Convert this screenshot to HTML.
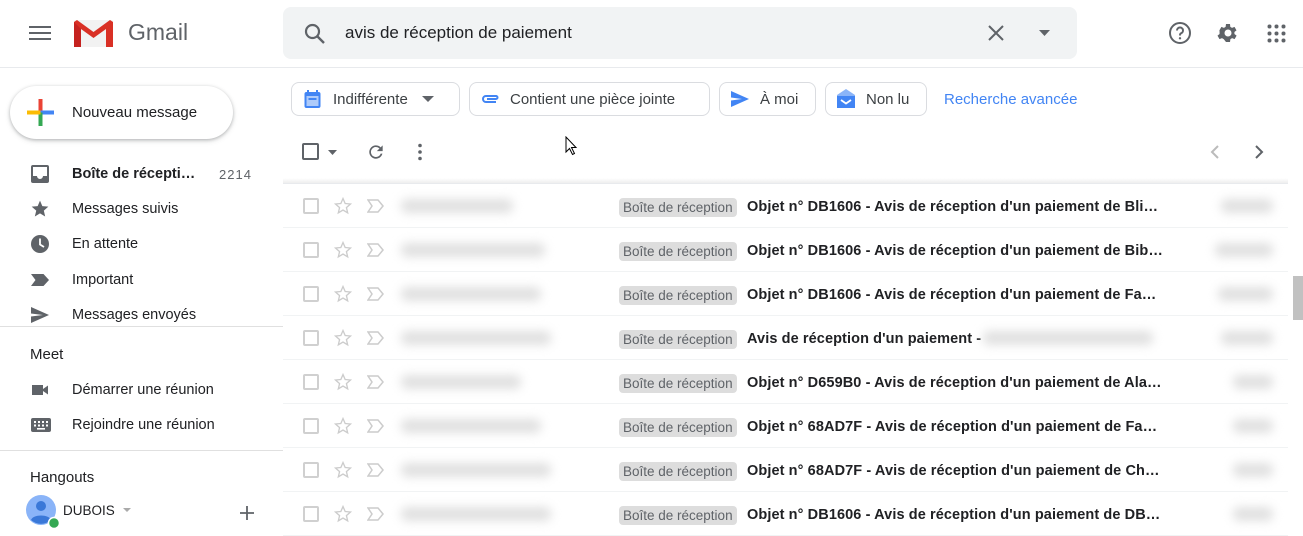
<!DOCTYPE html><html><head><meta charset="utf-8"><style>
*{margin:0;padding:0;box-sizing:border-box}
body{width:1303px;height:531px;overflow:hidden;background:#fff;font-family:"Liberation Sans",Arial,sans-serif;position:relative;color:#202124}
.a{position:absolute}
.nav{position:absolute;left:30px;font-size:14.5px;color:#202124;display:flex;align-items:center}
.nav svg{position:absolute;left:0}
.nav span{position:absolute;left:42px;white-space:nowrap}
.chip{position:absolute;top:82px;height:34px;border:1px solid #dadce0;border-radius:8px;font-size:15px;color:#3c4043;display:flex;align-items:center;white-space:nowrap}
.row{position:absolute;left:283px;width:1005px;height:44px;border-bottom:1px solid #f1f3f4}
.cb{position:absolute;left:20px;top:14px;width:16px;height:16px;border:2px solid #d0d0d0;border-radius:2px}
.blur{position:absolute;background:#e0e0e0;filter:blur(5px);height:14px;top:15px;border-radius:6px}
.lab{position:absolute;left:336px;top:14px;background:#ddd;border-radius:4px;font-size:13.5px;color:#5f6368;padding:2px 4px;height:19px;line-height:15px;white-space:nowrap}
.subj{position:absolute;left:464px;top:15px;font-size:14.5px;font-weight:bold;color:#202124;letter-spacing:.1px;white-space:nowrap}
</style></head><body>
<svg class="a" style="left:29px;top:25px" width="22" height="16"><rect y="1" width="22" height="2" fill="#5f6368"/><rect y="7" width="22" height="2" fill="#5f6368"/><rect y="13" width="22" height="2" fill="#5f6368"/></svg>
<svg class="a" style="left:73px;top:19px" width="41" height="29" viewBox="0 0 41 29"><rect x="1" y="1" width="39" height="27" rx="2" fill="#f2f2f2"/><path d="M1 3v25h7V10l12.5 9L33 10v18h7V3l-3-2-16.5 12L4 1z" fill="#d93025"/><path d="M1 3v25h7V10z" fill="#c5221f"/></svg>
<div class="a" style="left:128px;top:19px;font-size:23px;color:#5f6368">Gmail</div>
<div class="a" style="left:283px;top:7px;width:794px;height:52px;background:#f1f3f4;border-radius:8px"></div>
<svg class="a" style="left:304px;top:23px" width="22" height="22" viewBox="0 0 22 22"><circle cx="8.5" cy="8.5" r="6.5" fill="none" stroke="#5f6368" stroke-width="2.2"/><path d="M13 13l7 7" stroke="#5f6368" stroke-width="2.4"/></svg>
<div class="a" style="left:345px;top:23px;font-size:17px;color:#202124">avis de réception de paiement</div>
<svg class="a" style="left:988px;top:25px" width="16" height="16"><path d="M1 1l14 14M15 1L1 15" stroke="#5f6368" stroke-width="2"/></svg>
<svg class="a" style="left:1039px;top:30px" width="12" height="6"><path d="M0 0h11L5.5 6z" fill="#5f6368"/></svg>
<svg class="a" style="left:1168px;top:21px" width="24" height="24" viewBox="0 0 24 24"><circle cx="12" cy="12" r="10" fill="none" stroke="#5f6368" stroke-width="2"/><path d="M9 9.5a3 3 0 1 1 4 2.8c-1 .4-1 1-1 2.2" fill="none" stroke="#5f6368" stroke-width="2"/><circle cx="12" cy="17.3" r="1.2" fill="#5f6368"/></svg>
<svg class="a" style="left:1216px;top:21px" width="24" height="24" viewBox="0 0 24 24"><path fill="#5f6368" d="M19.4 13a7.5 7.5 0 0 0 0-2l2.1-1.6-2-3.5-2.5 1a7 7 0 0 0-1.7-1L15 3h-4l-.4 2.9a7 7 0 0 0-1.7 1l-2.5-1-2 3.5L4.6 11a7.5 7.5 0 0 0 0 2l-2.1 1.6 2 3.5 2.5-1a7 7 0 0 0 1.7 1L11 21h4l.4-2.9a7 7 0 0 0 1.7-1l2.5 1 2-3.5zM13 15.5a3.5 3.5 0 1 1 0-7 3.5 3.5 0 0 1 0 7z" transform="translate(-1 0)"/></svg>
<svg class="a" style="left:1267px;top:24px" width="19" height="19"><g fill="#5f6368"><circle cx="2.5" cy="2.5" r="2"/><circle cx="9.5" cy="2.5" r="2"/><circle cx="16.5" cy="2.5" r="2"/><circle cx="2.5" cy="9.5" r="2"/><circle cx="9.5" cy="9.5" r="2"/><circle cx="16.5" cy="9.5" r="2"/><circle cx="2.5" cy="16.5" r="2"/><circle cx="9.5" cy="16.5" r="2"/><circle cx="16.5" cy="16.5" r="2"/></g></svg>
<div class="a" style="left:0;top:67px;width:1303px;height:1px;background:#e8eaed"></div>
<div class="a" style="left:10px;top:86px;width:223px;height:53px;border-radius:27px;background:#fff;box-shadow:0 1px 3px rgba(60,64,67,.3),0 2px 6px rgba(60,64,67,.15)"></div>
<svg class="a" style="left:27px;top:99px" width="27" height="27" viewBox="0 0 27 27"><rect x="11.5" y="0" width="4" height="13.5" fill="#ea4335"/><rect x="13.5" y="11.5" width="13.5" height="4" fill="#4285f4"/><rect x="11.5" y="13.5" width="4" height="13.5" fill="#34a853"/><rect x="0" y="11.5" width="13.5" height="4" fill="#fbbc04"/></svg>
<div class="a" style="left:72px;top:104px;font-size:15px;color:#202124">Nouveau message</div>
<div class="nav" style="top:165px;height:18px;width:230px"><svg width="20" height="20" viewBox="0 0 20 20"><rect x="1" y="1" width="18" height="18" rx="2" fill="#5f6368"/><path d="M3 3h14v9h-4a3 3 0 0 1-6 0H3z" fill="#fff"/></svg><span style="font-weight:bold">Boîte de récepti…</span><span style="left:189px;font-size:13px;color:#5f6368;letter-spacing:1px">2214</span></div>
<div class="nav" style="top:200px;height:18px"><svg width="20" height="20" viewBox="0 0 24 24"><path fill="#5f6368" d="M12 17.3l6.2 3.7-1.6-7L22 9.2l-7.2-.6L12 2 9.2 8.6 2 9.2 7.5 14l-1.7 7z"/></svg><span>Messages suivis</span></div>
<div class="nav" style="top:235px;height:18px"><svg width="20" height="20" viewBox="0 0 20 20"><circle cx="10" cy="10" r="9" fill="#5f6368"/><path d="M10 4.5v6l4 2.5" stroke="#fff" stroke-width="1.8" fill="none"/></svg><span>En attente</span></div>
<div class="nav" style="top:271px;height:18px"><svg width="20" height="20" viewBox="0 0 20 20"><path fill="#5f6368" d="M1 4h12.5l5.5 6-5.5 6H1l4.5-6z"/></svg><span>Important</span></div>
<div class="nav" style="top:306px;height:18px"><svg width="20" height="20" viewBox="0 0 20 20"><path fill="#5f6368" d="M1 18l18-8L1 2v6.5L13 10 1 11.5z"/></svg><span>Messages envoyés</span></div>
<div class="a" style="left:0;top:326px;width:283px;height:1px;background:#e0e0e0"></div>
<div class="a" style="left:30px;top:346px;font-size:15px">Meet</div>
<div class="nav" style="top:381px;height:18px"><svg width="20" height="20" viewBox="0 0 20 20"><path fill="#5f6368" d="M2 5h11v10H2zM13 9l5-3.5v9L13 11z"/></svg><span>Démarrer une réunion</span></div>
<div class="nav" style="top:416px;height:18px"><svg width="22" height="20" viewBox="0 0 22 20"><rect x="1" y="3" width="20" height="14" rx="2" fill="#5f6368"/><g fill="#fff"><rect x="4" y="6" width="2" height="2"/><rect x="8" y="6" width="2" height="2"/><rect x="12" y="6" width="2" height="2"/><rect x="16" y="6" width="2" height="2"/><rect x="4" y="9.5" width="2" height="2"/><rect x="8" y="9.5" width="2" height="2"/><rect x="12" y="9.5" width="2" height="2"/><rect x="16" y="9.5" width="2" height="2"/><rect x="7" y="13" width="8" height="1.6"/></g></svg><span>Rejoindre une réunion</span></div>
<div class="a" style="left:0;top:450px;width:283px;height:1px;background:#e0e0e0"></div>
<div class="a" style="left:30px;top:469px;font-size:15px">Hangouts</div>
<svg class="a" style="left:26px;top:495px" width="36" height="36" viewBox="0 0 36 36"><circle cx="15" cy="15" r="15" fill="#8ab4f8"/><circle cx="15" cy="11" r="5" fill="#3a78d8"/><path d="M5 25c2-6 18-6 20 0a15 15 0 0 1-20 0z" fill="#3a78d8"/><circle cx="28" cy="28" r="5.5" fill="#34a853" stroke="#fff" stroke-width="1.5"/></svg>
<div class="a" style="left:63px;top:503px;font-size:13.5px;color:#202124">DUBOIS</div>
<svg class="a" style="left:123px;top:508px" width="8" height="4"><path d="M0 0h8L4 4z" fill="#aaa"/></svg>
<svg class="a" style="left:240px;top:506px" width="14" height="14"><path d="M7 0v14M0 7h14" stroke="#5f6368" stroke-width="1.8"/></svg>
<div class="chip" style="left:291px;width:169px"><svg style="margin-left:12px" width="17" height="19" viewBox="0 0 17 19"><rect x="0.5" y="2" width="16" height="16" rx="2" fill="#4285f4"/><rect x="2.5" y="6" width="12" height="10" fill="#aecbfa"/><rect x="3" y="0" width="2" height="4" fill="#4285f4"/><rect x="12" y="0" width="2" height="4" fill="#4285f4"/><rect x="4.5" y="8" width="8" height="2" fill="#4285f4"/></svg><span style="margin-left:12px">Indifférente</span><svg style="margin-left:14px" width="12" height="6"><path d="M0 0h12L6 6z" fill="#5f6368"/></svg></div>
<div class="chip" style="left:469px;width:241px"><svg style="margin-left:11px" width="20" height="12" viewBox="0 0 20 12"><path d="M15 3H5a3 3 0 0 0 0 6h10" fill="none" stroke="#4285f4" stroke-width="2"/><path d="M6 6h9a1.5 1.5 0 0 0 0-3" fill="none" stroke="#4285f4" stroke-width="2"/></svg><span style="margin-left:9px">Contient une pièce jointe</span></div>
<div class="chip" style="left:719px;width:97px"><svg style="margin-left:10px" width="20" height="18" viewBox="0 0 20 18"><path d="M1 17L19 9 1 1v6.5L12 9 1 10.5z" fill="#4285f4"/></svg><span style="margin-left:10px">À moi</span></div>
<div class="chip" style="left:825px;width:102px"><svg style="margin-left:10px" width="20" height="22" viewBox="0 0 20 22"><path d="M10 1L1 7v13h18V7z" fill="#8ab4f8"/><path d="M1 8h18v12H1z" fill="#4285f4"/><path d="M5 12l5 3.5 5-3.5" fill="none" stroke="#fff" stroke-width="1.8"/></svg><span style="margin-left:10px">Non lu</span></div>
<div class="a" style="left:944px;top:91px;font-size:15px;color:#4285f4">Recherche avancée</div>
<div class="a" style="left:302px;top:143px;width:17px;height:17px;border:2px solid #5f6368;border-radius:2px"></div>
<svg class="a" style="left:328px;top:150px" width="9" height="5"><path d="M0 0h9L4.5 5z" fill="#5f6368"/></svg>
<svg class="a" style="left:366px;top:142px" width="20" height="20" viewBox="0 0 24 24"><path fill="#5f6368" d="M17.6 6.4A8 8 0 1 0 19.7 14h-2.1a6 6 0 1 1-1.4-6.2L13 11h7V4z"/></svg>
<svg class="a" style="left:418px;top:143px" width="4" height="18"><circle cx="2" cy="2.5" r="1.8" fill="#5f6368"/><circle cx="2" cy="9" r="1.8" fill="#5f6368"/><circle cx="2" cy="15.5" r="1.8" fill="#5f6368"/></svg>
<svg class="a" style="left:565px;top:136px" width="13" height="20"><path d="M1 1v15l3.5-3.5 3 6 2-1-3-6H11z" fill="#fff" stroke="#000" stroke-width="1"/></svg>
<svg class="a" style="left:1210px;top:145px" width="10" height="14"><path d="M8 1L2 7l6 6" fill="none" stroke="#bbb" stroke-width="2"/></svg>
<svg class="a" style="left:1254px;top:145px" width="10" height="14"><path d="M2 1l6 6-6 6" fill="none" stroke="#5f6368" stroke-width="2"/></svg>
<div class="a" style="left:283px;top:178px;width:1005px;height:6px;background:linear-gradient(#fff,#eee);border-bottom:1px solid #e8eaed"></div>
<div class="a" style="left:1293px;top:276px;width:10px;height:44px;background:#c1c1c1"></div>
<div id="rows"></div>
<script>
var d=[[112,"Objet n° DB1606 - Avis de réception d'un paiement de Bli…",0,52],[144,"Objet n° DB1606 - Avis de réception d'un paiement de Bib…",0,58],[140,"Objet n° DB1606 - Avis de réception d'un paiement de Fa…",0,55],[150,"Avis de réception d'un paiement - ",170,52],[120,"Objet n° D659B0 - Avis de réception d'un paiement de Ala…",0,40],[140,"Objet n° 68AD7F - Avis de réception d'un paiement de Fa…",0,40],[150,"Objet n° 68AD7F - Avis de réception d'un paiement de Ch…",0,40],[150,"Objet n° DB1606 - Avis de réception d'un paiement de DB…",0,40]];
var h="";d.forEach(function(r,i){var t=184+i*44;h+='<div class="row" style="top:'+t+'px"><div class="cb"></div><svg class="a" style="left:50px;top:12px" width="20" height="20" viewBox="0 0 24 24"><path d="M12 3l2.6 6 6.4.6-4.9 4.3 1.5 6.3L12 16.9l-5.6 3.3 1.5-6.3L3 9.6 9.4 9z" fill="none" stroke="#ccc" stroke-width="1.6"/></svg><svg class="a" style="left:84px;top:15px" width="18" height="14" viewBox="0 0 18 14"><path d="M1 1h10l5 6-5 6H1l4-6z" fill="none" stroke="#ccc" stroke-width="1.5"/></svg><div class="blur" style="left:118px;width:'+r[0]+'px"></div><div class="lab">Boîte de réception</div><div class="subj">'+r[1]+'</div>'+(r[2]?'<div class="blur" style="left:700px;width:'+r[2]+'px"></div>':'')+'<div class="blur" style="left:'+(990-r[3])+'px;width:'+r[3]+'px"></div></div>'});
document.getElementById("rows").innerHTML=h;
</script>
</body></html>
